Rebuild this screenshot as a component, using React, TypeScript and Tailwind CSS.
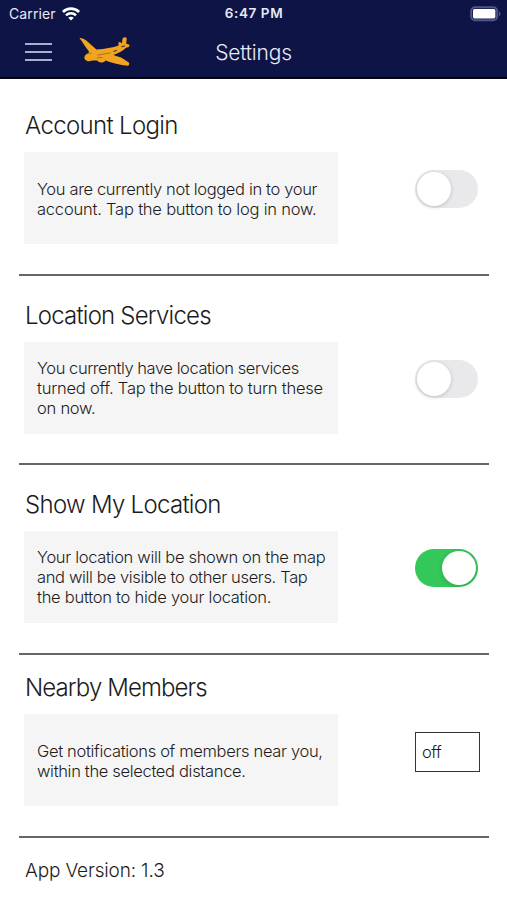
import { useState } from 'react';
import clsx from 'clsx';

type Section = {
  id: string;
  title: string;
  titleClass: string;
  lines: { text: string; className: string }[];
  className: string;
};

const sections: Section[] = [
  {
    id: 'login',
    title: 'Account Login',
    titleClass: 'tracking-[-0.66px]',
    className: 'h-[197px] pt-[33px]',
    lines: [
      { text: 'You are currently not logged in to your', className: 'tracking-[-0.35px]' },
      { text: 'account. Tap the button to log in now.', className: 'tracking-[-0.21px]' },
    ],
  },
  {
    id: 'services',
    title: 'Location Services',
    titleClass: 'tracking-[-0.79px]',
    className: 'h-[189px] pt-[26px]',
    lines: [
      { text: 'You currently have location services', className: 'tracking-[-0.44px]' },
      { text: 'turned off. Tap the button to turn these', className: 'tracking-[-0.23px]' },
      { text: 'on now.', className: 'tracking-[-0.25px]' },
    ],
  },
  {
    id: 'visible',
    title: 'Show My Location',
    titleClass: 'tracking-[-0.7px]',
    className: 'h-[190px] pt-[26px]',
    lines: [
      { text: 'Your location will be shown on the map', className: 'tracking-[-0.32px]' },
      { text: 'and will be visible to other users. Tap', className: 'tracking-[-0.35px]' },
      { text: 'the button to hide your location.', className: 'tracking-[-0.26px]' },
    ],
  },
  {
    id: 'nearby',
    title: 'Nearby Members',
    titleClass: 'tracking-[-0.9px]',
    className: 'h-[183px] pt-[19px]',
    lines: [
      { text: 'Get notifications of members near you,', className: 'tracking-[-0.33px]' },
      { text: 'within the selected distance.', className: 'tracking-[-0.33px]' },
    ],
  },
];

function WifiIcon() {
  return (
    <svg className="h-[14px] w-[18px]" viewBox="0 0 18 14" fill="none" stroke="#fff" strokeWidth="2.6">
      <path d="M0.9 5C5.3 0.5 12.7 0.5 17.1 5" />
      <path d="M4 8.3C6.8 5.5 11.2 5.5 14 8.3" />
      <path d="M9 13.6L6.2 10.8C7.8 9.3 10.2 9.3 11.8 10.8Z" fill="#fff" stroke="none" />
    </svg>
  );
}

function BatteryIcon() {
  return (
    <svg className="h-[16px] w-[32px]" viewBox="0 0 32 16" fill="none">
      <rect x="1.2" y="1.2" width="26" height="13" rx="4" stroke="#50558a" strokeWidth="2" />
      <rect x="3" y="3" width="22.4" height="9.4" rx="1.6" fill="#fff" />
      <path d="M29 5.4C31 6.2 31 9.2 29 10Z" fill="#50558a" />
    </svg>
  );
}

function PlaneLogo() {
  return (
    <svg className="h-[30px] w-[52px]" viewBox="0 -1 52 30">
      <path
        fill="#f0a41f"
        d="M0.4 0C2.6 -0.4 5 0.8 7 2.2L17.4 11.4C26 10.8 34 9.4 39.6 7.4L39.4 4.4L41 4L43 5.4C43.2 3 43.2 1 44 0C45 -1 47.2 -0.8 47.6 0.2C47.8 2.2 47.4 4 47 5.6L50 6.4C51 7.4 50.4 8.8 49 9.2L47 9.8C44 12.8 39 15.4 34.4 17L42.6 19.8L49.8 24.6C50.8 26 50.2 27.8 48.4 27.8C41 27 33 24.8 26.4 22.4C25 25 20 25.4 18.2 22.6C15.4 22.8 12.4 22.4 10.6 23.2C7.6 23.4 5 21.6 5.4 19.2C5.8 17.2 7.4 15.8 9.2 15.2L10 13.6C7 9.8 4 4.8 0.4 0Z"
      />
      <path
        fill="none"
        stroke="#8f6426"
        strokeWidth="0.8"
        d="M8.4 16.4L10 15L12.4 15.4M18.4 17.2L31.6 14.8M18 20.4L20.6 19.2L23.4 19.8"
      />
      <path fill="none" stroke="#4d3536" strokeWidth="1.1" d="M34.4 13.4L37.8 12.2M42.4 8.6L46 8" />
    </svg>
  );
}

function Toggle({ on, onChange, label }: { on: boolean; onChange: () => void; label: string }) {
  return (
    <button
      role="switch"
      aria-checked={on}
      aria-label={label}
      onClick={onChange}
      className={clsx(
        'flex h-[38px] w-[62.5px] items-center rounded-full p-[2px]',
        on ? 'justify-end bg-[#34c759]' : 'justify-start bg-[#e9e9eb]'
      )}
    >
      <span className="size-[34px] rounded-full bg-white shadow-[0_1px_4px_rgba(0,0,0,0.18)]" />
    </button>
  );
}

export default function App() {
  const [enabled, setEnabled] = useState<Record<string, boolean>>({
    login: false,
    services: false,
    visible: true,
  });

  const toggle = (id: string) => setEnabled((prev) => ({ ...prev, [id]: !prev[id] }));

  return (
    <div className="h-[900px] w-[507px] overflow-hidden bg-white font-['Inter','Liberation_Sans',sans-serif] font-light text-[#1c1c1c]">
      <header className="h-[79px] border-b-2 border-[#05050f] bg-[#0e1446] text-[#e8eaf5]">
        {/* status bar */}
        <div className="grid h-[27px] grid-cols-3 items-center pr-[5px] pl-[9px]">
          <div className="flex items-center gap-[6px]">
            <span className="text-[14px] font-normal tracking-[0.1px]">Carrier</span>
            <WifiIcon />
          </div>
          <span className="pr-[3px] text-center text-[13.5px] font-semibold tracking-[0.6px]">6:47 PM</span>
          <div className="flex justify-end">
            <BatteryIcon />
          </div>
        </div>

        {/* nav bar */}
        <div className="grid h-[50px] grid-cols-[1fr_auto_1fr] items-center">
          <div className="flex items-center pl-[25px]">
            <button aria-label="Menu" className="flex w-[27px] flex-col gap-[6px]">
              <span className="h-[2px] bg-[#a9aed0]" />
              <span className="h-[2px] bg-[#a9aed0]" />
              <span className="h-[2px] bg-[#a9aed0]" />
            </button>
            <div className="ml-[27px]">
              <PlaneLogo />
            </div>
          </div>
          <h1 className="pt-px text-[21px] tracking-[-0.2px]">Settings</h1>
          <span />
        </div>
      </header>

      <main>
        {sections.map((s) => (
          <section key={s.id} className={clsx('mr-[18px] ml-[19px] border-b-2 border-[#666]', s.className)}>
            <h2 className={clsx('mb-3 pl-[6px] text-[24px] leading-[28px]', s.titleClass)}>{s.title}</h2>
            <div className="flex items-center justify-between pl-[5px]">
              <div
                className={clsx(
                  'flex h-[92px] w-[314px] flex-col justify-center bg-[#f5f5f5] pl-[13px] text-[16.5px] leading-[20px] whitespace-nowrap',
                  s.lines.length === 2 && 'pt-[2px]'
                )}
              >
                {s.lines.map((line) => (
                  <p key={line.text} className={line.className}>
                    {line.text}
                  </p>
                ))}
              </div>
              {s.id === 'nearby' ? (
                <div className="mr-[9px] mb-[16px] flex h-[40px] w-[65px] items-center border-[1.5px] border-[#333] pl-[6px] text-[16.5px] tracking-[-0.5px]">
                  off
                </div>
              ) : (
                <div className="mr-[11.5px] mb-[18px]">
                  <Toggle on={enabled[s.id]} onChange={() => toggle(s.id)} label={s.title} />
                </div>
              )}
            </div>
          </section>
        ))}
        <p className="pt-[21px] pl-[25px] text-[19px] leading-[24px] tracking-[-0.15px]">App Version: 1.3</p>
      </main>
    </div>
  );
}
